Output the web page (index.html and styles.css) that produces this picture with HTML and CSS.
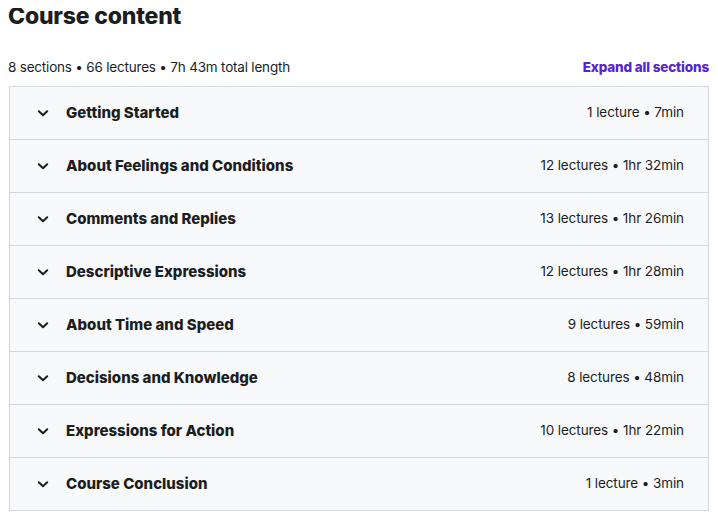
FILE: index.html
```html
<!DOCTYPE html>
<html>
<head>
<meta charset="utf-8">
<link rel="stylesheet" href="styles.css">
</head>
<body>
<div class="wrap">
  <h2 class="title">Course content</h2>
  <div class="meta-bar">
    <span class="meta">8 sections • 66 lectures • 7h 43m total length</span>
    <button class="expand">Expand all sections</button>
  </div>
  <div class="list">
    <div class="row"><svg class="chev" viewBox="0 0 16 16"><path d="M3.8 6.3 L8 10.3 L12.2 6.3"/></svg><span class="name">Getting Started</span><span class="info">1 lecture • 7min</span></div>
    <div class="row"><svg class="chev" viewBox="0 0 16 16"><path d="M3.8 6.3 L8 10.3 L12.2 6.3"/></svg><span class="name">About Feelings and Conditions</span><span class="info">12 lectures • 1hr 32min</span></div>
    <div class="row"><svg class="chev" viewBox="0 0 16 16"><path d="M3.8 6.3 L8 10.3 L12.2 6.3"/></svg><span class="name">Comments and Replies</span><span class="info">13 lectures • 1hr 26min</span></div>
    <div class="row"><svg class="chev" viewBox="0 0 16 16"><path d="M3.8 6.3 L8 10.3 L12.2 6.3"/></svg><span class="name">Descriptive Expressions</span><span class="info">12 lectures • 1hr 28min</span></div>
    <div class="row"><svg class="chev" viewBox="0 0 16 16"><path d="M3.8 6.3 L8 10.3 L12.2 6.3"/></svg><span class="name">About Time and Speed</span><span class="info">9 lectures • 59min</span></div>
    <div class="row"><svg class="chev" viewBox="0 0 16 16"><path d="M3.8 6.3 L8 10.3 L12.2 6.3"/></svg><span class="name">Decisions and Knowledge</span><span class="info">8 lectures • 48min</span></div>
    <div class="row"><svg class="chev" viewBox="0 0 16 16"><path d="M3.8 6.3 L8 10.3 L12.2 6.3"/></svg><span class="name">Expressions for Action</span><span class="info">10 lectures • 1hr 22min</span></div>
    <div class="row"><svg class="chev" viewBox="0 0 16 16"><path d="M3.8 6.3 L8 10.3 L12.2 6.3"/></svg><span class="name">Course Conclusion</span><span class="info">1 lecture • 3min</span></div>
  </div>
</div>
</body>
</html>
```
FILE: styles.css
```css
* { box-sizing: border-box; }
body {
  margin: 8px;
  font-family: Inter, "Noto Sans", sans-serif;
  color: #1c1d1f;
  background: #fff;
}
.wrap { width: 701px; }
.title {
  margin: 0;
  font-size: 23px;
  font-weight: 800;
  line-height: 17px;
  color: #1c1d1f;
  letter-spacing: -0.2px;
}
.meta-bar {
  display: flex;
  justify-content: space-between;
  align-items: center;
  margin-top: 33px;
  height: 18px;
  margin-bottom: 10px;
}
.meta {
  font-size: 13.5px;
  letter-spacing: -0.2px;
  color: #1c1d1f;
}
.expand {
  background: none;
  border: 0;
  padding: 0;
  margin-right: 0;
  font-family: inherit;
  font-size: 13.5px;
  font-weight: 800;
  letter-spacing: -0.15px;
  color: #5624d0;
}
.list {
  border: 1px solid #d1d7dc;
  border-bottom: 0;
  margin-left: 1px;
  width: 700px;
}
.row {
  display: flex;
  align-items: center;
  height: 53px;
  padding: 0 24px 1px 25px;
  background: #f7f9fa;
  border-bottom: 1px solid #d1d7dc;
}
.chev {
  width: 16px;
  height: 16px;
  margin-right: 15px;
  fill: none;
  stroke: #1c1d1f;
  stroke-width: 2;
  stroke-linecap: round;
  stroke-linejoin: round;
}
.name {
  flex: 1;
  font-size: 15px;
  font-weight: 800;
  letter-spacing: 0;
  color: #1c1d1f;
}
.info {
  font-size: 13.5px;
  letter-spacing: -0.1px;
  line-height: 16px;
  padding-bottom: 1px;
  color: #1c1d1f;
}
```
